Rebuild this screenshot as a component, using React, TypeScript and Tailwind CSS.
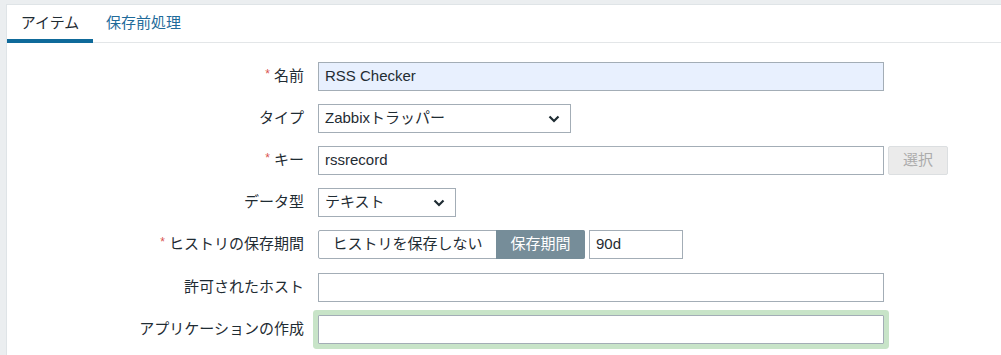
import React from "react";

const font = { fontFamily: '"Liberation Sans", "Noto Sans CJK JP", sans-serif' };

const Chevron = () => (
  <svg width="12" height="8" viewBox="0 0 12 8" className="shrink-0">
    <polyline points="1.5,1.5 6,6 10.5,1.5" fill="none" stroke="#1f2c33" strokeWidth="2.2" />
  </svg>
);

const Row = ({ label, required, children }: { label: string; required?: boolean; children: React.ReactNode }) => (
  <div className="flex items-center h-[29px]">
    <div className="w-[311px] pr-[14px] text-right text-[15px] text-[#1f2c33] whitespace-nowrap">
      {required && <span className="text-[#d9534f] text-[12px] mr-[4px] relative -top-[3px]">*</span>}
      {label}
    </div>
    {children}
  </div>
);

const Select = ({ value, width }: { value: string; width: string }) => (
  <div className={`flex items-center justify-between h-[29px] border border-[#a3adb6] bg-white pl-[6px] pr-[10px] text-[15px] text-[#1f2c33] ${width}`}>
    <span>{value}</span>
    <Chevron />
  </div>
);

export default function App() {
  return (
    <div style={font} className="w-[1001px] h-[355px] bg-[#ebeef0] pl-[6px] pt-[4px] overflow-hidden">
      <div className="h-full bg-white border-l border-t border-[#dfe4e7]">
        <div className="flex h-[38px] border-b border-[#e3e6e8]">
          <div className="w-[86px] flex items-center justify-center text-[15px] text-[#1f2c33] border-b-[4px] border-[#0f6a9a] pt-[3px] -mb-px">
            アイテム
          </div>
          <div className="ml-[13px] flex items-center text-[15px] text-[#1f6b9a]">保存前処理</div>
        </div>

        <div className="flex flex-col gap-[13px] pt-[19px]">
          <Row label="名前" required>
            <div className="w-[566px] h-[29px] border border-[#a3adb6] bg-[#e8f0fe] px-[6px] flex items-center text-[15px] text-[#1f2c33]">
              RSS Checker
            </div>
          </Row>
          <Row label="タイプ">
            <Select value="Zabbixトラッパー" width="w-[253px]" />
          </Row>
          <Row label="キー" required>
            <div className="w-[566px] h-[29px] border border-[#a3adb6] bg-white px-[6px] flex items-center text-[15px] text-[#1f2c33]">
              rssrecord
            </div>
            <div className="ml-[4px] w-[60px] h-[29px] rounded-[2px] border border-[#dcdfe1] bg-[#ebebeb] flex items-center justify-center text-[15px] text-[#acacac]">
              選択
            </div>
          </Row>
          <Row label="データ型">
            <Select value="テキスト" width="w-[138px]" />
          </Row>
          <Row label="ヒストリの保存期間" required>
            <div className="flex h-[29px] border border-[#a3adb6] rounded-[2px] bg-white text-[15px]">
              <div className="w-[177px] flex items-center justify-center text-[#1f2c33]">ヒストリを保存しない</div>
              <div className="w-[89px] -my-px -mr-px flex items-center justify-center bg-[#768d99] text-white rounded-r-[2px]">
                保存期間
              </div>
            </div>
            <div className="ml-[4px] w-[94px] h-[29px] border border-[#a3adb6] bg-white px-[6px] flex items-center text-[15px] text-[#1f2c33]">
              90d
            </div>
          </Row>
          <div className="flex flex-col gap-[13px] pt-px">
            <Row label="許可されたホスト">
              <div className="w-[566px] h-[29px] border border-[#a3adb6] bg-white" />
            </Row>
            <Row label="アプリケーションの作成">
              <div className="w-[566px] h-[29px] border border-[#a3adb6] bg-white ring-[5px] ring-[#c8e4c8] rounded-[1px]" />
            </Row>
          </div>
        </div>
      </div>
    </div>
  );
}
